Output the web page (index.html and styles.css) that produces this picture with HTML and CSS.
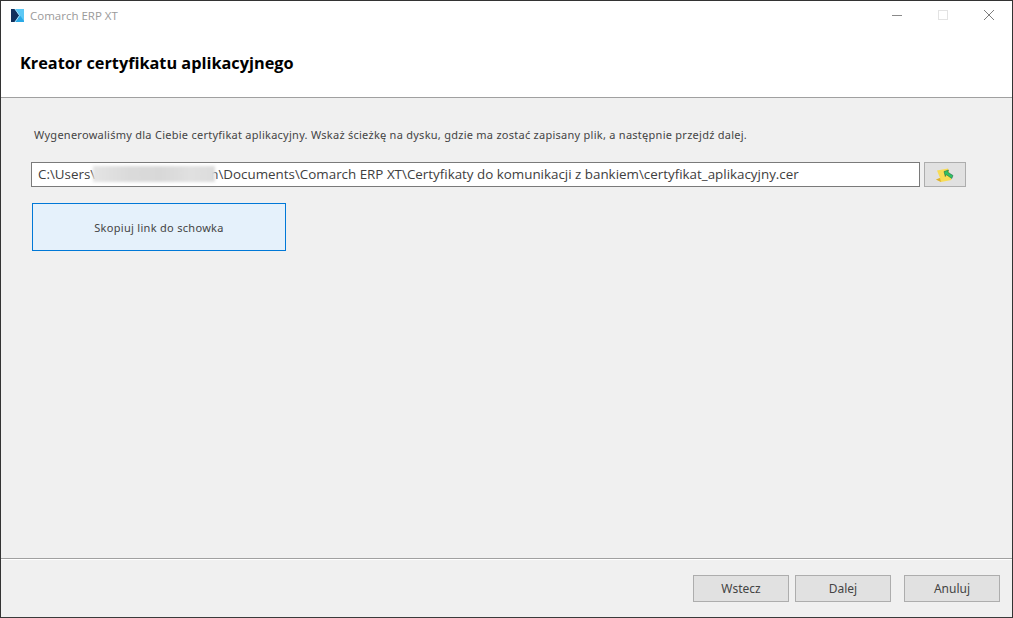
FILE: index.html
```html
<!DOCTYPE html>
<html lang="pl">
<head>
<meta charset="utf-8">
<title>Comarch ERP XT</title>
<link rel="stylesheet" href="styles.css">
</head>
<body>
<div class="window">
  <header class="head">
    <div class="titlebar">
      <svg class="logo" width="13" height="13" viewBox="0 0 13 13"><rect width="13" height="13" fill="#2aa9e6"/><path d="M0 0H3.5L8 6.5L3.5 13H0Z" fill="#12305c"/><path d="M4.5 0H13V12Z" fill="#5cc8f5"/><path d="M4 0L8.6 6.5L4 13" fill="none" stroke="#e8f6fd" stroke-width=".7"/></svg>
      <span class="apptitle">Comarch ERP XT</span>
      <div class="controls">
        <svg class="ctl" width="46" height="30" viewBox="0 0 46 30"><path d="M18 15.5H28" stroke="#8a8a8a"/></svg>
        <svg class="ctl" width="46" height="30" viewBox="0 0 46 30"><rect x="18.5" y="10.5" width="9" height="9" fill="none" stroke="#e3e3e3"/></svg>
        <svg class="ctl" width="46" height="30" viewBox="0 0 46 30"><path d="M18 10L28 20M28 10L18 20" stroke="#7d7d7d"/></svg>
      </div>
    </div>
    <h1 class="heading">Kreator certyfikatu aplikacyjnego</h1>
  </header>
  <main class="content">
    <p class="intro">Wygenerowaliśmy dla Ciebie certyfikat aplikacyjny. Wskaż ścieżkę na dysku, gdzie ma zostać zapisany plik, a następnie przejdź dalej.</p>
    <div class="pathrow">
      <div class="pathbox"><span>C:\Users\</span><span class="blur"></span><span>n\Documents\Comarch ERP XT\Certyfikaty do komunikacji z bankiem\certyfikat_aplikacyjny.cer</span></div>
      <button class="browse" type="button" aria-label="Wybierz">
        <svg width="18" height="16" viewBox="0 0 18 16"><path d="M1 3.5L12 1.5L15.5 13L5 15L0 12.5L4 11Z" fill="#f8dc55"/><path d="M0 12.5L4 11L5 15Z" fill="#dcb02e"/><path d="M8 4.5L12.5 3L11.8 5.2L17 8.5L15.8 11.5L10.2 7.6L9.3 9.5Z" fill="#2fc066" stroke="#14603a" stroke-width=".5"/></svg>
      </button>
    </div>
    <button class="copy" type="button">Skopiuj link do schowka</button>
  </main>
  <footer class="foot">
    <button class="btn" type="button">Wstecz</button>
    <button class="btn" type="button">Dalej</button>
    <button class="btn cancel" type="button">Anuluj</button>
  </footer>
</div>
</body>
</html>
```
FILE: styles.css
```css
* { box-sizing: border-box; }
html, body { margin: 0; height: 100%; overflow: hidden; }
body { font-family: "Noto Sans", "DejaVu Sans", sans-serif; color: #3c3c3c; background: #f0f0f0; }
.window { width: 1013px; height: 618px; display: flex; flex-direction: column; border: 1px solid #333; border-bottom-color: #3a3a3a; background: #f0f0f0; }
.head { height: 97px; background: #fff; border-bottom: 1px solid #a0a0a0; flex: none; }
.titlebar { height: 30px; padding: 0 0 2px 10px; display: flex; align-items: center; }
.logo { flex: none; }
.apptitle { margin-left: 6px; font-family: "Open Sans", sans-serif; font-size: 11.5px; color: #9a9a9a; }
.controls { margin-left: auto; display: flex; }
.ctl { display: block; }
.heading { margin: 6px 0 0 19px; font-family: "Open Sans", sans-serif; font-size: 16.3px; line-height: 52px; height: 52px; font-weight: 700; color: #000; white-space: nowrap; }
.content { flex: 1; padding: 29px 46px 0 30px; min-height: 0; }
.intro { margin: 0 0 0 3px; font-size: 11px; line-height: 15px; height: 15px; white-space: nowrap; color: #444; letter-spacing: .26px; }
.pathrow { display: flex; gap: 4px; margin-top: 20px; }
.pathbox { width: 890px; height: 25px; background: #fff; border: 1px solid #7a7a7a; padding-left: 6px; font-size: 13.38px; line-height: 22px; color: #404040; display: flex; white-space: nowrap; font-family: "Open Sans", sans-serif; }
.blur { flex: none; width: 122px; height: 16px; margin: 3px -5px 0 -2px; background: linear-gradient(90deg, #e4e4e4, #dadada 30%, #d8d8d8 55%, #e0e0e0 80%, #dcdcdc); filter: blur(1.5px); }
.browse { width: 42px; height: 25px; padding: 0; display: flex; align-items: center; justify-content: center; background: #e1e1e1; border: 1px solid #adadad; }
.copy { display: block; width: 254px; height: 48px; margin: 16px 0 0 1px; background: #e5f1fb; border: 1px solid #0078d7; font: 11px "Noto Sans", sans-serif; color: #444; letter-spacing: .3px; }
.foot { height: 59px; flex: none; border-top: 1px solid #a0a0a0; box-shadow: inset 0 1px 0 #fff; display: flex; padding: 16px 12px 0 692px; gap: 6px; }
.btn { width: 96px; height: 27px; padding: 0; background: #e1e1e1; border: 1px solid #adadad; font: 12px "Noto Sans", sans-serif; color: #444; }
.cancel { margin-left: 7px; }
```
